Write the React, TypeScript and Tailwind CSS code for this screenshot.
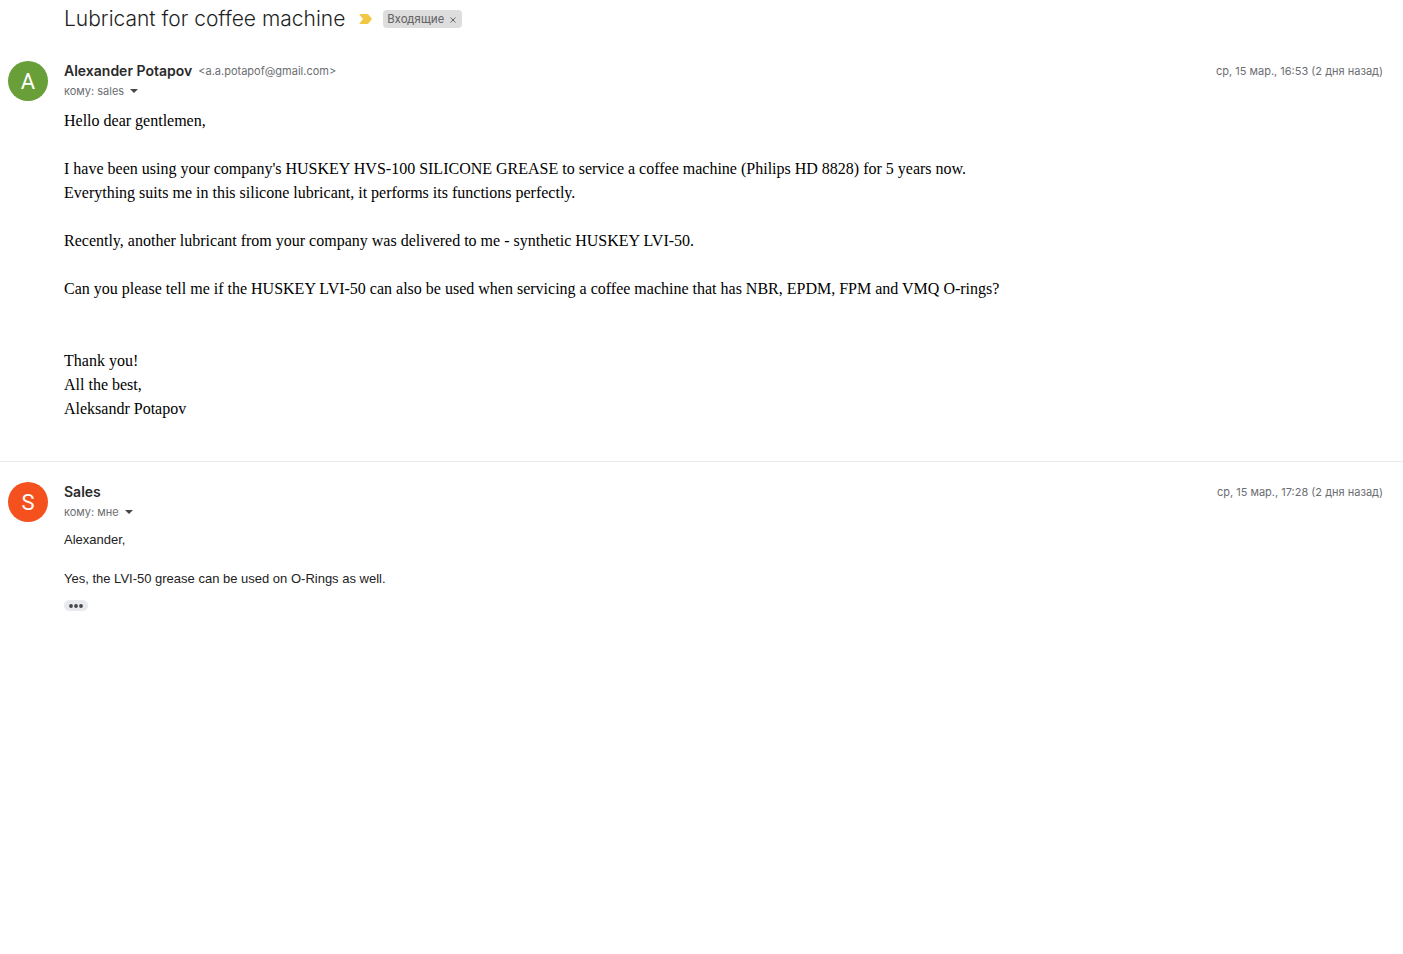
import { ReactNode } from 'react';

interface MessageProps {
  initial: string;
  avatarClass: string;
  name: string;
  email?: string;
  recipient: string;
  date: string;
  children: ReactNode;
}

function Message({ initial, avatarClass, name, email, recipient, date, children }: MessageProps) {
  return (
    <article className="flex pl-2 pr-5">
      <div className={`flex h-10 w-10 shrink-0 items-center justify-center rounded-full pt-px text-[22px] text-white font-['Roboto',sans-serif] ${avatarClass}`}>
        {initial}
      </div>
      <div className="ml-4 min-w-0 flex-1">
        <header>
          <div className="flex h-5 items-center">
            <h2 className="text-sm font-semibold text-[#2a2a2a]">{name}</h2>
            {email && <span className="ml-1.5 text-[11px] text-[#6b6e72]">&lt;{email}&gt;</span>}
            <time className="ml-auto text-[11px] text-[#6b6e72]">{date}</time>
          </div>
          <button type="button" className="flex h-5 items-center text-[11px] text-[#6b6e72]">
            кому: {recipient}
            <svg viewBox="0 0 8 4" className="ml-1.5 h-1 w-2 fill-[#444746]">
              <path d="M0 0h8L4 4z" />
            </svg>
          </button>
        </header>
        {children}
      </div>
    </article>
  );
}

export default function App() {
  return (
    <main className="min-h-screen bg-white font-['Inter',sans-serif]">
      <div className="flex h-[38px] items-center pl-16">
        <h1 className="text-[21px] font-light text-[#1f1f1f]">Lubricant for coffee machine</h1>
        <svg viewBox="0 0 13 10" className="ml-3.5 h-2.5 w-[13px] fill-[#f2c744]">
          <path d="M1 0h7.4q.6 0 1 .5L13 5 9.400 9.500q-.4.5-1 .5H1q-.9 0-.4-.8L4 5 .6.8Q.1 0 1 0z" />
        </svg>
        <span className="ml-[11px] flex h-[18px] items-center rounded bg-[#ddd] px-1 text-xs text-[#666] font-['Roboto',sans-serif]">
          Входящие
          <button type="button" aria-label="Удалить ярлык" className="ml-1 flex h-4 w-2.5 items-center justify-center">
            <svg viewBox="0 0 6 6" className="mt-0.5 h-1.5 w-1.5 stroke-[#666]">
              <path d="M.5.5l5 5M5.500.5l-5 5" />
            </svg>
          </button>
        </span>
      </div>

      <div className="pt-[23px]">
        <Message
          initial="A"
          avatarClass="bg-[#689f38]"
          name="Alexander Potapov"
          email="a.a.potapof@gmail.com"
          recipient="sales"
          date="ср, 15 мар., 16:53 (2 дня назад)"
        >
          <div className="mt-2 pb-10 text-base leading-6 text-black font-['Liberation_Serif',serif]">
            <p>Hello dear gentlemen,</p>
            <p className="mt-6">
              I have been using your company's HUSKEY HVS-100 SILICONE GREASE to service a coffee machine (Philips HD 8828) for 5 years now.
              <br />
              Everything suits me in this silicone lubricant, it performs its functions perfectly.
            </p>
            <p className="mt-6">Recently, another lubricant from your company was delivered to me - synthetic HUSKEY LVI-50.</p>
            <p className="mt-6">
              Can you please tell me if the HUSKEY LVI-50 can also be used when servicing a coffee machine that has NBR, EPDM, FPM and VMQ O-rings?
            </p>
            <p className="mt-12">
              Thank you!
              <br />
              All the best,
              <br />
              Aleksandr Potapov
            </p>
          </div>
        </Message>
      </div>

      <div className="border-t border-[#e8eaed] pt-5">
        <Message
          initial="S"
          avatarClass="bg-[#f4511e]"
          name="Sales"
          recipient="мне"
          date="ср, 15 мар., 17:28 (2 дня назад)"
        >
          <div className="mt-2 text-[13px] leading-5 text-[#222] font-['Liberation_Sans',sans-serif]">
            <p>Alexander,</p>
            <p className="mt-[19px]">Yes, the LVI-50 grease can be used on O-Rings as well.</p>
          </div>
          <button type="button" aria-label="Показать сокращенный текст" className="mt-[11px] flex h-[11px] w-6 items-center justify-center rounded-full bg-[#e8eaed]">
            <svg viewBox="0 0 14 4" className="h-1 w-3.5 fill-[#444746]">
              <circle cx="2" cy="2" r="1.900" />
              <circle cx="7" cy="2" r="1.900" />
              <circle cx="12" cy="2" r="1.900" />
            </svg>
          </button>
        </Message>
      </div>
    </main>
  );
}
